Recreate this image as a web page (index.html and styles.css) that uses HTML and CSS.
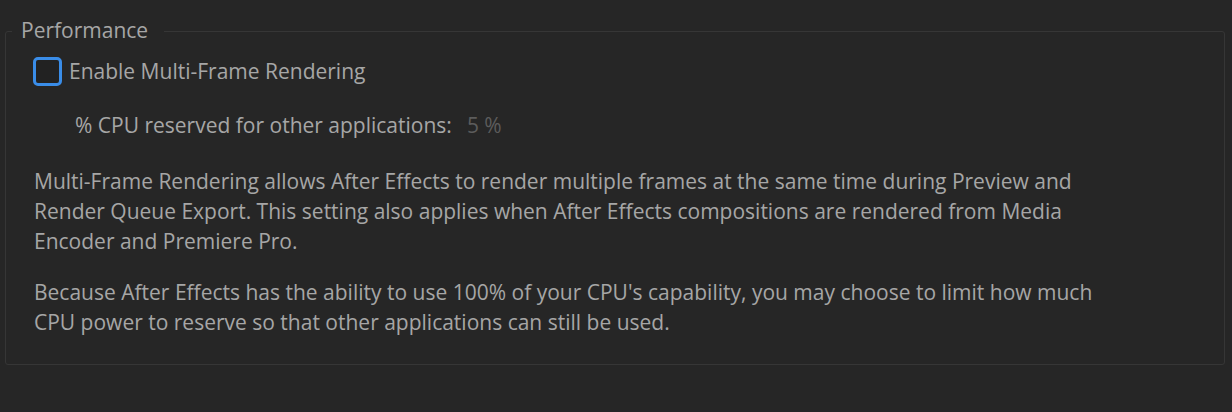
FILE: index.html
```html
<!DOCTYPE html>
<html lang="en">
<head>
<meta charset="utf-8">
<title>Performance</title>
<link rel="stylesheet" href="styles.css">
</head>
<body>
<fieldset class="group">
  <legend class="group-title">Performance</legend>
  <label class="check-row">
    <span class="checkbox" role="checkbox" aria-checked="false"></span>
    <span class="check-label">Enable Multi-Frame Rendering</span>
  </label>
  <div class="field-row">
    <span class="field-label">% CPU reserved for other applications:</span>
    <span class="field-value">5 %</span>
  </div>
  <p class="desc desc-first">Multi-Frame Rendering allows After Effects to render multiple frames at the same time during Preview and Render Queue Export. This setting also applies when After Effects compositions are rendered from Media Encoder and Premiere Pro.</p>
  <p class="desc">Because After Effects has the ability to use 100% of your CPU's capability, you may choose to limit how much CPU power to reserve so that other applications can still be used.</p>
</fieldset>
</body>
</html>
```
FILE: styles.css
```css
html, body {
  margin: 0;
  padding: 0;
  background: #262626;
}

body {
  font-family: "Open Sans", "Noto Sans", sans-serif;
  font-size: 21px;
  line-height: 30px;
  color: #a6a6a6;
  width: 1232px;
  height: 412px;
  overflow: hidden;
}

.group {
  margin: 15px 7px 0 5px;
  padding: 0 0 27px 28px;
  border: 1px solid #363636;
  border-radius: 3px;
  min-width: 0;
}

.group-title {
  margin-left: -22px;
  padding: 0 16px 2px 9px;
  line-height: 30px;
  color: #a6a6a6;
}

.check-row {
  display: flex;
  align-items: flex-start;
  gap: 7px;
  margin: 9px 0 0 -1px;
  height: 30px;
  cursor: default;
}

.checkbox {
  box-sizing: border-box;
  width: 29px;
  height: 29px;
  margin-top: 1px;
  border: 3px solid #3a8de8;
  border-radius: 5px;
  background: #222222;
  flex: none;
}

.field-row {
  display: flex;
  gap: 15px;
  margin: 24px 0 0 41px;
}

.field-value {
  color: #5c5c5c;
}

.desc {
  margin: 21px 0 0 0;
  max-width: 1086px;
}

.desc-first {
  margin-top: 26px;
}
```
